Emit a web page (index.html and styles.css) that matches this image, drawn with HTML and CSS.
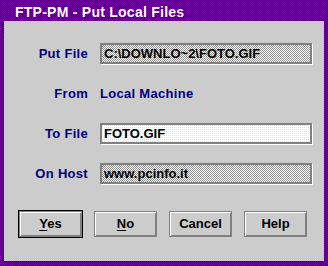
FILE: index.html
```html
<!DOCTYPE html>
<html>
<head>
<meta charset="utf-8">
<link rel="stylesheet" href="styles.css">
</head>
<body>
<div class="window">
  <div class="titlebar">FTP-PM - Put Local Files</div>
  <div class="client">
    <div class="form">
      <div class="label">Put File</div>
      <div class="field gray">C:\DOWNLO~2\FOTO.GIF</div>
      <div class="label">From</div>
      <div class="value">Local Machine</div>
      <div class="label">To File</div>
      <div class="field yellow">FOTO.GIF</div>
      <div class="label">On Host</div>
      <div class="field gray">www.pcinfo.it</div>
    </div>
    <div class="buttons">
      <button class="btn default"><u>Y</u>es</button>
      <button class="btn"><u>N</u>o</button>
      <button class="btn">Cancel</button>
      <button class="btn">Help</button>
    </div>
  </div>
</div>
</body>
</html>
```
FILE: styles.css
```css
html, body {
  margin: 0;
  padding: 0;
  background: #cccccc;
}
.window {
  width: 328px;
  height: 266px;
  box-sizing: border-box;
  padding: 0 4px 5px 4px;
  display: flex;
  flex-direction: column;
  background: repeating-conic-gradient(#0000a8 0 25%, #7800a8 0 50%) 0 0 / 2px 2px;
  font-family: "Liberation Sans", Arial, sans-serif;
  font-weight: bold;
}
.titlebar {
  height: 21px;
  box-sizing: border-box;
  padding: 3px 0 0 11px;
  line-height: 18px;
  font-size: 14px;
  color: #ffffff;
  letter-spacing: 0.25px;
  white-space: nowrap;
}
.client {
  flex: 1;
  background: #cccccc;
  padding-top: 22px;
}
.form {
  display: grid;
  grid-template-columns: 84px 212px;
  grid-auto-rows: 21px;
  column-gap: 12px;
  row-gap: 19px;
  font-size: 13px;
}
.label {
  text-align: right;
  color: #000080;
  line-height: 21px;
  letter-spacing: 0.3px;
}
.value {
  color: #000080;
  line-height: 21px;
  letter-spacing: 0.3px;
}
.field {
  box-sizing: border-box;
  height: 21px;
  border: 2px solid #808080;
  box-shadow: 1px 1px 0 #ffffff;
  padding-left: 2px;
  line-height: 17px;
  color: #000000;
  white-space: nowrap;
  overflow: hidden;
}
.gray {
  background: repeating-conic-gradient(#909090 0 25%, #ffffff 0 50%) 0 0 / 2px 2px;
}
.yellow {
  background-color: #ffffff;
  background-image:
    linear-gradient(to right, transparent 1px, #ffffff 1px),
    linear-gradient(to bottom, #ffff00 1px, #ffffff 1px);
  background-size: 2px 2px, 2px 2px;
  background-position: 0 0, 0 0;
}
.buttons {
  display: flex;
  gap: 12px;
  margin-top: 27px;
  padding-left: 15px;
}
.btn {
  width: 63px;
  height: 26px;
  box-sizing: border-box;
  padding: 0;
  margin: 0;
  border: 1px solid #808080;
  background: #cccccc;
  box-shadow: inset 1px 1px 0 #ffffff, inset -1px -1px 0 #808080;
  font-family: "Liberation Sans", Arial, sans-serif;
  font-weight: bold;
  font-size: 13px;
  color: #000000;
  line-height: 22px;
}
.btn u {
  text-decoration-thickness: 1px;
  text-underline-offset: 2px;
}
.default {
  outline: 1px solid #000000;
}
```
